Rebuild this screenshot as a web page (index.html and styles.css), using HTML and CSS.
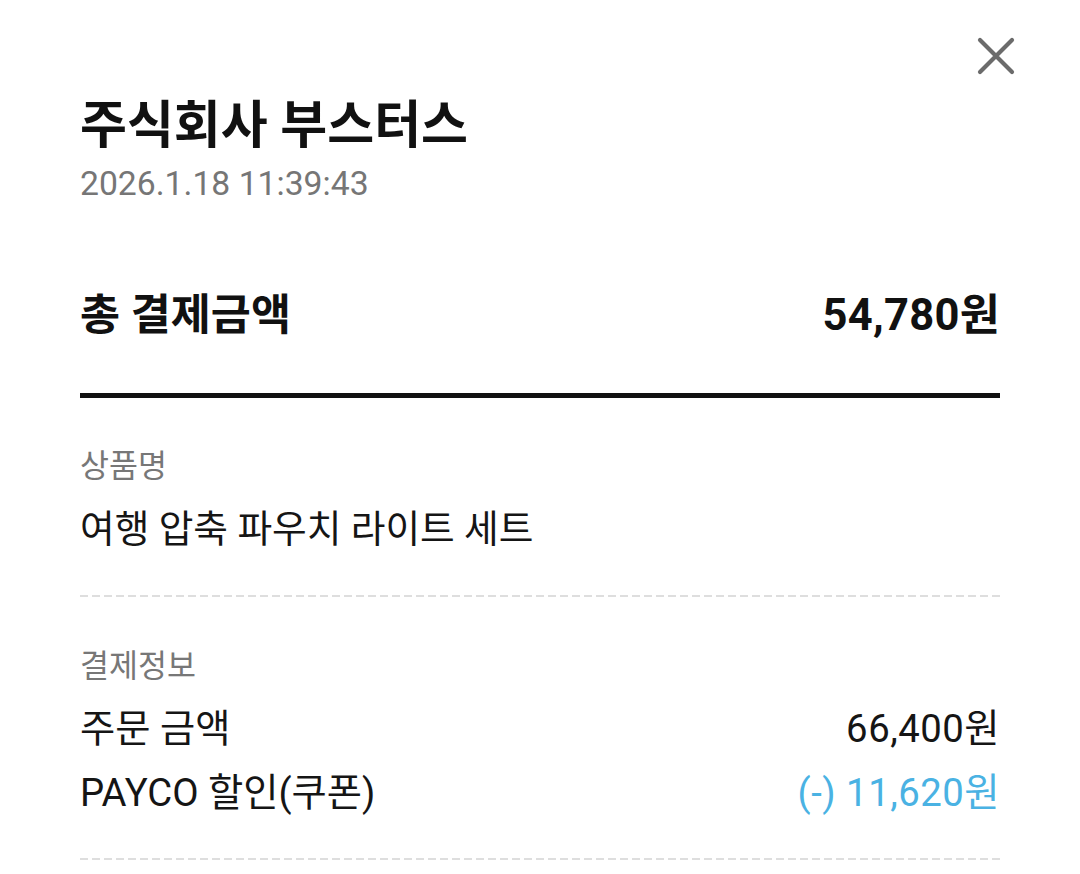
FILE: index.html
```html
<!DOCTYPE html>
<html lang="ko">
<head>
<meta charset="utf-8">
<title>결제 상세</title>
<link rel="stylesheet" href="styles.css">
</head>
<body>
<main class="sheet">
  <header class="head">
    <h1 class="merchant">주식회사 부스터스</h1>
    <p class="date">2026.1.18 11:39:43</p>
    <button class="close" aria-label="닫기">
      <svg viewBox="0 0 38 38" width="38" height="38" aria-hidden="true">
        <path d="M3 3 L35 35 M35 3 L3 35" stroke="#6b6b6b" stroke-width="4.2" stroke-linecap="round" fill="none"/>
      </svg>
    </button>
  </header>

  <div class="total-row">
    <span class="total-label">총 결제금액</span>
    <span class="total-amount">54,780원</span>
  </div>
  <div class="rule-thick"></div>

  <section class="block">
    <div class="label">상품명</div>
    <div class="product">여행 압축 파우치 라이트 세트</div>
  </section>
  <div class="rule-dash rule-dash-1"></div>

  <section class="block">
    <div class="label label-pay">결제정보</div>
    <div class="row row-first">
      <span>주문 금액</span>
      <span class="amount">66,400원</span>
    </div>
    <div class="row row-second">
      <span>PAYCO 할인(쿠폰)</span>
      <span class="amount discount">(-) 11,620원</span>
    </div>
  </section>
  <div class="rule-dash rule-dash-2"></div>
</main>
</body>
</html>
```

FILE: styles.css
```css
* { box-sizing: border-box; }

html, body {
  margin: 0;
  padding: 0;
  background: #ffffff;
}

body {
  font-family: Roboto, "Noto Sans CJK KR", "Noto Sans", sans-serif;
  color: #151515;
}

.sheet {
  width: 1080px;
  padding: 0 80px;
}

.head {
  position: relative;
  padding-top: 98px;
}

.merchant {
  margin: 0;
  font-size: 51px;
  line-height: 56px;
  font-weight: 700;
  color: #111111;
}

.date {
  margin: 10px 0 0;
  font-size: 33.7px;
  line-height: 40px;
  color: #767676;
}

.close {
  position: absolute;
  top: 37px;
  right: -15px;
  width: 38px;
  height: 38px;
  padding: 0;
  border: 0;
  background: transparent;
  display: block;
}

.close svg { display: block; }

.total-row {
  margin-top: 88px;
  display: flex;
  justify-content: space-between;
  align-items: center;
  font-size: 43.5px;
  line-height: 48px;
  font-weight: 700;
  color: #111111;
}

.total-amount { letter-spacing: 0.3px; }

.rule-thick {
  margin-top: 53px;
  height: 5px;
  background: #111111;
}

.block {
  display: flex;
  flex-direction: column;
}

.label {
  margin-top: 51px;
  font-size: 31.5px;
  line-height: 36px;
  color: #777777;
}

.label-pay { margin-top: 52px; }

.product {
  margin-top: 22px;
  font-size: 37.7px;
  line-height: 44px;
  color: #151515;
}

.rule-dash {
  height: 2px;
  background: repeating-linear-gradient(to right, #dedede 0 8px, transparent 8px 12px);
}

.rule-dash-1 { margin-top: 44px; }
.rule-dash-2 { margin-top: 43px; }

.row {
  display: flex;
  justify-content: space-between;
  align-items: center;
  font-size: 38.3px;
  line-height: 44px;
  color: #151515;
}

.amount { letter-spacing: 0.5px; }

.row-first { margin-top: 22px; }
.row-second { margin-top: 20px; }

.discount { color: #4ab2e3; }
```
